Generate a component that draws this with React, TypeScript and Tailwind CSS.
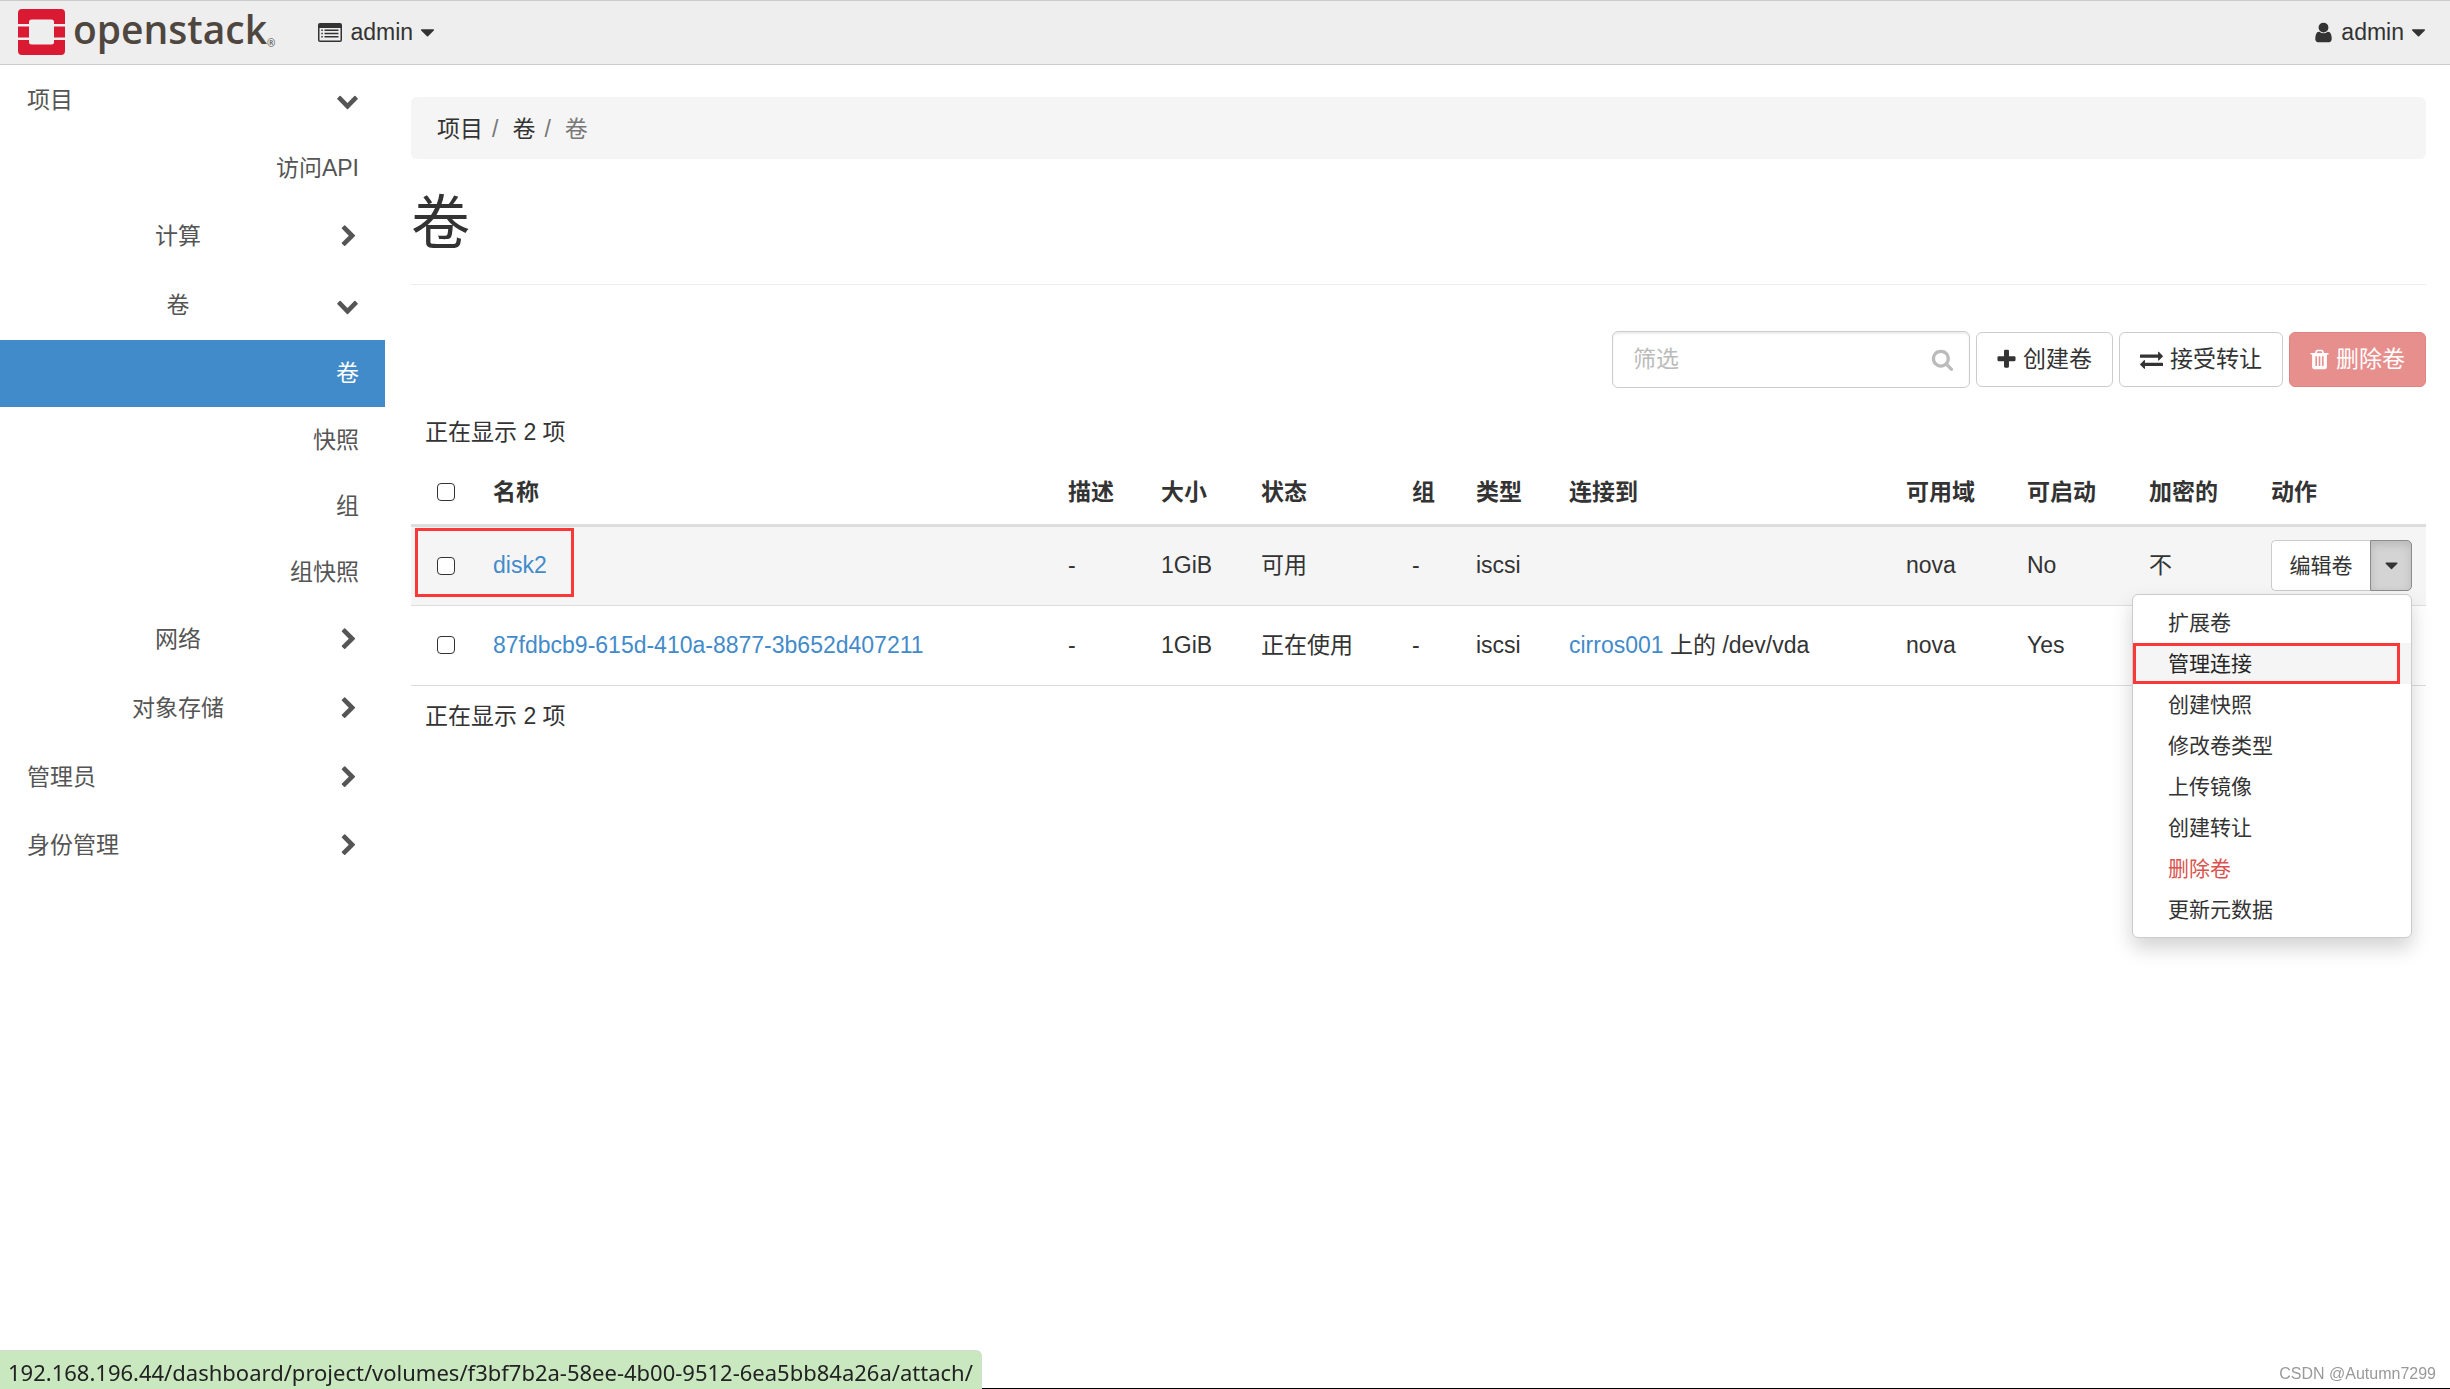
import { useState } from 'react';
import type { ReactNode } from 'react';
import clsx from 'clsx';

// Icons
type IconProps = { d: string; className?: string; viewBox?: string };

const Icon = ({ d, className = 'size-[23px]', viewBox = '0 0 1792 1792' }: IconProps) => (
  <svg viewBox={viewBox} className={clsx('shrink-0', className)} fill="currentColor" aria-hidden="true">
    <path d={d} />
  </svg>
);

const CHEVRON_RIGHT =
  'M1363 877l-742 742q-19 19-45 19t-45-19l-166-166q-19-19-19-45t19-45l531-531-531-531q-19-19-19-45t19-45l166-166q19-19 45-19t45 19l742 742q19 19 19 45t-19 45z';
const CHEVRON_DOWN =
  'M1683 808l-742 741q-19 19-45 19t-45-19l-742-741q-19-19-19-45.5t19-45.5l166-165q19-19 45-19t45 19l531 531 531-531q19-19 45-19t45 19l166 165q19 19 19 45.5t-19 45.5z';
const CARET_DOWN =
  'M1408 704q0 26-19 45l-448 448q-19 19-45 19t-45-19l-448-448q-19-19-19-45t19-45 45-19h896q26 0 45 19t19 45z';
const PLUS =
  'M1600 736v192q0 40-28 68t-68 28h-416v416q0 40-28 68t-68 28h-192q-40 0-68-28t-28-68v-416h-416q-40 0-68-28t-28-68v-192q0-40 28-68t68-28h416v-416q0-40 28-68t68-28h192q40 0 68 28t28 68v416h416q40 0 68 28t28 68z';
const EXCHANGE =
  'M1792 1184v192q0 13-9.5 22.5t-22.5 9.5h-1376v192q0 13-9.5 22.5t-22.5 9.5q-12 0-24-10l-319-320q-9-9-9-22 0-14 9-23l320-320q9-9 23-9 13 0 22.5 9.5t9.5 22.5v192h1376q13 0 22.5 9.5t9.5 22.5zm0-544q0 14-9 23l-320 320q-9 9-23 9-13 0-22.5-9.5t-9.5-22.5v-192h-1376q-13 0-22.5-9.5t-9.5-22.5v-192q0-13 9.5-22.5t22.5-9.5h1376v-192q0-14 9-23t23-9q12 0 24 10l319 319q9 9 9 23z';
const TRASH =
  'M704 1376v-704q0-14-9-23t-23-9h-64q-14 0-23 9t-9 23v704q0 14 9 23t23 9h64q14 0 23-9t9-23zm256 0v-704q0-14-9-23t-23-9h-64q-14 0-23 9t-9 23v704q0 14 9 23t23 9h64q14 0 23-9t9-23zm256 0v-704q0-14-9-23t-23-9h-64q-14 0-23 9t-9 23v704q0 14 9 23t23 9h64q14 0 23-9t9-23zm-544-992h448l-48-117q-7-9-17-11h-317q-10 2-17 11zm928 32v64q0 14-9 23t-23 9h-96v948q0 83-47 143.5t-113 60.5h-832q-66 0-113-58.5t-47-141.5v-952h-96q-14 0-23-9t-9-23v-64q0-14 9-23t23-9h309l70-167q15-37 54-63t79-26h320q40 0 79 26t54 63l70 167h309q14 0 23 9t9 23z';
const SEARCH =
  'M1216 832q0-185-131.5-316.5t-316.5-131.5-316.5 131.5-131.5 316.5 131.5 316.5 316.5 131.5 316.5-131.5 131.5-316.5zm512 832q0 52-38 90t-90 38q-54 0-90-38l-343-342q-179 124-399 124-143 0-273.5-55.5t-225-150-150-225-55.5-273.5 55.5-273.5 150-225 225-150 273.5-55.5 273.5 55.5 225 150 150 225 55.5 273.5q0 220-124 399l343 343q37 37 37 90z';
const USER =
  'M1536 1399q0 109-62.5 187t-150.5 78h-854q-88 0-150.5-78t-62.5-187q0-85 8.5-160.5t31.5-152 58.5-131 94-89 134.5-34.5q131 128 313 128t313-128q76 0 134.5 34.5t94 89 58.5 131 31.5 152 8.5 160.5zm-256-887q0 159-112.5 271.5t-271.5 112.5-271.5-112.5-112.5-271.5 112.5-271.5 271.5-112.5 271.5 112.5 112.5 271.5z';

const ListIcon = () => (
  <svg viewBox="0 0 24 19" className="h-[19px] w-6 shrink-0" fill="currentColor" aria-hidden="true">
    <path fillRule="evenodd" d="M2 0h20a2 2 0 0 1 2 2v15a2 2 0 0 1-2 2H2a2 2 0 0 1-2-2V2a2 2 0 0 1 2-2zM1.500 5v12a.5.5 0 0 0 .5.5h20a.5.5 0 0 0 .5-.5V5z" />
    <path d="M3.300 6.500h1.500V8H3.300zM3.300 9.800h1.500v1.500H3.300zM3.300 13.100h1.500v1.500H3.300zM6.500 6.500h14V8h-14zM6.500 9.800h14v1.500h-14zM6.500 13.100h14v1.500h-14z" />
  </svg>
);

const LogoMark = () => (
  <svg viewBox="0 0 47 46" className="h-[46px] w-[47px] shrink-0" fill="#da1a32" aria-hidden="true">
    <path d="M4 0h39a4 4 0 0 1 4 4v11H36v-2a2.500 2.500 0 0 0-2.500-2.500h-20A2.500 2.500 0 0 0 11 13v2H0V4a4 4 0 0 1 4-4z" />
    <path d="M0 17.500h11v11H0zM36 17.500h11v11H36z" />
    <path d="M0 31h11v2a2.500 2.500 0 0 0 2.500 2.500h20A2.500 2.500 0 0 0 36 33v-2h11v11a4 4 0 0 1-4 4H4a4 4 0 0 1-4-4z" />
  </svg>
);

type NavItem = { label: string; level: 1 | 2 | 3; open?: boolean; active?: boolean; size: string };

const navItems: NavItem[] = [
  { label: '项目', level: 1, open: true, size: 'h-[68px]' },
  { label: '访问API', level: 3, size: 'h-[68px]' },
  { label: '计算', level: 2, open: false, size: 'h-[69px]' },
  { label: '卷', level: 2, open: true, size: 'h-[69px]' },
  { label: '卷', level: 3, active: true, size: 'h-[67px]' },
  { label: '快照', level: 3, size: 'h-[66px]' },
  { label: '组', level: 3, size: 'h-[66px]' },
  { label: '组快照', level: 3, size: 'h-[66px]' },
  { label: '网络', level: 2, open: false, size: 'h-[69px]' },
  { label: '对象存储', level: 2, open: false, size: 'h-[69px]' },
  { label: '管理员', level: 1, open: false, size: 'h-[68px]' },
  { label: '身份管理', level: 1, open: false, size: 'h-[69px]' },
];

const columns = [
  { label: '名称', width: '' },
  { label: '描述', width: 'w-[93px]' },
  { label: '大小', width: 'w-[100px]' },
  { label: '状态', width: 'w-[151px]' },
  { label: '组', width: 'w-[64px]' },
  { label: '类型', width: 'w-[93px]' },
  { label: '连接到', width: 'w-[337px]' },
  { label: '可用域', width: 'w-[121px]' },
  { label: '可启动', width: 'w-[122px]' },
  { label: '加密的', width: 'w-[122px]' },
  { label: '动作', width: 'w-[168px]' },
];

const volumes = [
  { name: 'disk2', size: '1GiB', status: '可用', type: 'iscsi', host: '', device: '', zone: 'nova', bootable: 'No', encrypted: '不' },
  {
    name: '87fdbcb9-615d-410a-8877-3b652d407211',
    size: '1GiB',
    status: '正在使用',
    type: 'iscsi',
    host: 'cirros001',
    device: '/dev/vda',
    zone: 'nova',
    bootable: 'Yes',
    encrypted: '不',
  },
];

const menuItems = ['扩展卷', '管理连接', '创建快照', '修改卷类型', '上传镜像', '创建转让', '删除卷', '更新元数据'];

const Checkbox = ({ label }: { label: string }) => (
  <input
    type="checkbox"
    aria-label={label}
    className="block size-[18px] appearance-none rounded-[4px] border border-[#333] bg-white checked:bg-[#428bca]"
  />
);

const ToolbarButton = ({ icon, children, danger }: { icon: ReactNode; children: ReactNode; danger?: boolean }) => (
  <button
    type="button"
    className={clsx(
      'flex h-[55px] items-center gap-[7px] rounded-md border px-5',
      danger ? 'border-[#e38380] bg-[#e78f8d] text-white' : 'border-[#ccc] bg-white',
    )}
  >
    {icon}
    {children}
  </button>
);

const Sidebar = () => (
  <nav className="w-[385px] shrink-0 pt-px text-[#555]">
    {navItems.map((item, i) => (
      <a
        key={i}
        href="#"
        className={clsx(
          'flex items-center pr-[26px]',
          item.size,
          item.level === 2 ? 'pl-5' : 'pl-[27px]',
          item.active && 'bg-[#428bca] text-white',
        )}
      >
        <span className={clsx('flex-1', item.level === 2 && 'text-center', item.level === 3 && 'text-right')}>
          {item.label}
        </span>
        {item.open === true && <Icon d={CHEVRON_DOWN} />}
        {item.open === false && <Icon d={CHEVRON_RIGHT} viewBox="-100 0 1792 1792" />}
      </a>
    ))}
  </nav>
);

const ActionMenu = () => (
  <div className="absolute top-full right-0 z-10 mt-[3px] w-[280px] rounded-md border border-[#ccc] bg-white py-[7px] text-[21px] shadow-[0_10px_20px_rgba(0,0,0,0.175)]">
    <ul>
      {menuItems.map(item => (
        <li key={item} className="relative">
          <a
            href="#"
            className={clsx(
              'flex h-[41px] items-center px-[35px]',
              item === '管理连接' && 'bg-[#f5f5f5] text-[#262626]',
              item === '删除卷' && 'text-[#d9534f]',
            )}
          >
            {item}
          </a>
          {item === '管理连接' && (
            <span className="pointer-events-none absolute inset-y-0 left-0 right-[11px] border-3 border-[#fb3838]" />
          )}
        </li>
      ))}
    </ul>
  </div>
);

const App = () => {
  const [openRow, setOpenRow] = useState<string | null>('disk2');
  const [filter, setFilter] = useState('');

  return (
    <div className="flex min-h-screen flex-col bg-white font-['Liberation_Sans','Noto_Sans_CJK_SC',sans-serif] text-[23px] leading-[33px] text-[#333]">
      <header className="flex h-[65px] items-center border-y border-[#ccc] bg-[#eee] pr-6 pl-[18px]">
        <a href="#" aria-label="openstack" className="flex items-center gap-2 pb-0.5">
          <LogoMark />
          <span className="flex items-end pb-1.5 font-['Open_Sans',sans-serif] text-[39px] leading-[50px] font-semibold text-[#4f473f]">
            openstack
            <span className="text-[10px] leading-[22px] font-normal">®</span>
          </span>
        </a>
        <button type="button" className="ml-[43px] flex items-center">
          <ListIcon />
          <span className="ml-2">admin</span>
          <Icon d={CARET_DOWN} className="ml-[3px] size-[23px]" />
        </button>
        <button type="button" className="-mr-1 ml-auto flex items-center">
          <Icon d={USER} />
          <span className="ml-1.5">admin</span>
          <Icon d={CARET_DOWN} className="ml-[3px] size-[23px]" />
        </button>
      </header>

      <div className="flex flex-1">
        <Sidebar />
        <main className="min-w-0 flex-1 pt-8 pr-6 pl-[26px]">
          <ol className="flex h-[62px] items-center rounded-md bg-[#f5f5f5] px-[26px] pt-0.5">
            <li>
              <a href="#">项目</a>
              <span className="pr-3 pl-[9px] text-[#777]">/</span>
            </li>
            <li>
              <a href="#" className="ml-0.5">卷</a>
              <span className="pr-3 pl-[9px] text-[#777]">/</span>
            </li>
            <li className="ml-0.5 text-[#777]">卷</li>
          </ol>

          <h1 className="border-b border-[#eee] pt-[33px] pb-[27px] text-[59px] leading-[65px]">卷</h1>

          <div className="mt-[46px] flex items-center justify-end gap-1.5">
            <div className="relative">
              <input
                type="text"
                aria-label="筛选"
                placeholder="筛选"
                value={filter}
                onChange={e => setFilter(e.target.value)}
                className="h-[57px] w-[358px] rounded-md border border-[#ccc] bg-white px-5 shadow-[inset_0_2px_2px_rgba(0,0,0,0.075)] placeholder:text-[#bbb]"
              />
              <span className="pointer-events-none absolute inset-y-0 right-4 flex items-center text-[#bbb]">
                <Icon d={SEARCH} />
              </span>
            </div>
            <ToolbarButton icon={<Icon d={PLUS} viewBox="192 0 1408 1792" className="h-[23px] w-[19px]" />}>
              创建卷
            </ToolbarButton>
            <ToolbarButton icon={<Icon d={EXCHANGE} />}>接受转让</ToolbarButton>
            <ToolbarButton icon={<Icon d={TRASH} viewBox="192 0 1408 1792" className="h-[23px] w-[19px]" />} danger>
              删除卷
            </ToolbarButton>
          </div>

          <div className="mt-7 px-[14px]">正在显示 2 项</div>
          <table className="mt-3 w-full table-fixed border-collapse text-left">
            <thead>
              <tr className="h-16 border-b-3 border-[#ddd]">
                <th className="w-[69px] pl-[26px]">
                  <Checkbox label="全选" />
                </th>
                {columns.map(col => (
                  <th key={col.label} className={clsx('px-[13px] font-bold', col.width)}>{col.label}</th>
                ))}
              </tr>
            </thead>
            <tbody>
              {volumes.map(volume => (
                <tr
                  key={volume.name}
                  className={clsx('h-20 border-b border-[#ddd]', openRow === volume.name && 'bg-[#f5f5f5]')}
                >
                  <td className="relative pl-[26px]">
                    <Checkbox label={volume.name} />
                    {volume.name === 'disk2' && (
                      <span className="pointer-events-none absolute top-px left-1 h-[69px] w-[159px] border-3 border-[#fb3838]" />
                    )}
                  </td>
                  <td className="px-[13px]">
                    <a href="#" className="text-[#428bca]">{volume.name}</a>
                  </td>
                  <td className="px-[13px]">-</td>
                  <td className="px-[13px]">{volume.size}</td>
                  <td className="px-[13px]">{volume.status}</td>
                  <td className="px-[13px]">-</td>
                  <td className="px-[13px]">{volume.type}</td>
                  <td className="px-[13px]">
                    {volume.host && (
                      <>
                        <a href="#" className="text-[#428bca]">{volume.host}</a> 上的 {volume.device}
                      </>
                    )}
                  </td>
                  <td className="px-[13px]">{volume.zone}</td>
                  <td className="px-[13px]">{volume.bootable}</td>
                  <td className="px-[13px]">{volume.encrypted}</td>
                  <td className="px-[13px]">
                    <div className="relative flex w-[141px] text-[21px]">
                      <button type="button" className="h-[51px] flex-1 rounded-l-[5px] border border-r-0 border-[#ccc] bg-white">
                        编辑卷
                      </button>
                      <button
                        type="button"
                        aria-label="更多动作"
                        onClick={() => setOpenRow(openRow === volume.name ? null : volume.name)}
                        className={clsx(
                          'flex h-[51px] w-[42px] items-center justify-center rounded-r-[5px] border',
                          openRow === volume.name
                            ? 'border-[#8c8c8c] bg-[#d4d4d4] shadow-[inset_0_4px_8px_rgba(0,0,0,0.125)]'
                            : 'border-[#ccc] bg-white',
                        )}
                      >
                        <Icon d={CARET_DOWN} className="size-[21px]" />
                      </button>
                      {openRow === volume.name && <ActionMenu />}
                    </div>
                  </td>
                </tr>
              ))}
            </tbody>
          </table>
          <div className="mt-3.5 px-[14px]">正在显示 2 项</div>
        </main>
      </div>

      <footer className="fixed inset-x-0 bottom-0 flex items-end justify-between border-b border-black">
        <div className="-mb-px h-[39px] rounded-tr-md border-t border-r border-[#d5dcd2] bg-[#c9e8bf] px-2 font-['Noto_Sans',sans-serif] text-[22px] leading-[42px] text-[#222]">
          192.168.196.44/dashboard/project/volumes/f3bf7b2a-58ee-4b00-9512-6ea5bb84a26a/attach/
        </div>
        <div className="pr-3.5 text-[16px] leading-7 text-[#999]">CSDN @Autumn7299</div>
      </footer>
    </div>
  );
};

export default App;
